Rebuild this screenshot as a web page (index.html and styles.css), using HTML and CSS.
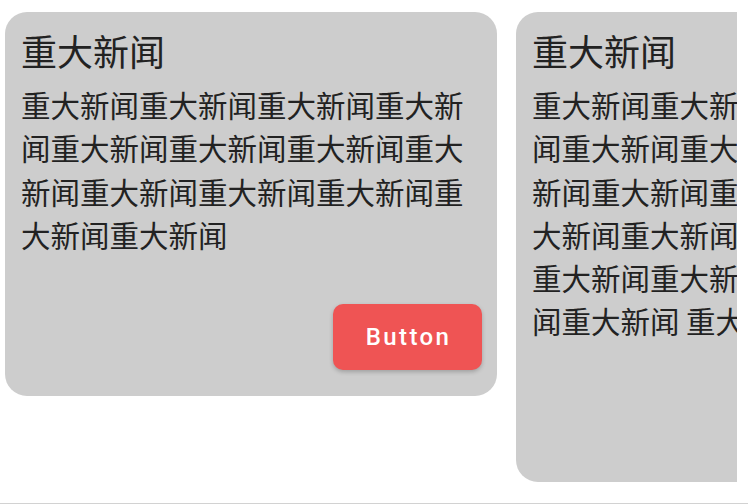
FILE: index.html
```html
<!DOCTYPE html>
<html lang="zh">
<head>
  <meta charset="UTF-8">
  <meta name="viewport" content="width=device-width, initial-scale=1.0">
  <title>重大新闻</title>
  <link rel="stylesheet" href="styles.css">
</head>
<body>
  <div class="page">
    <div class="strip flex row gap">
      <div class="card flex column">
        <h2 class="card-title">重大新闻</h2>
        <p class="card-text">重大新闻重大新闻重大新闻重大新闻重大新闻重大新闻重大新闻重大新闻重大新闻重大新闻重大新闻重大新闻重大新闻</p>
        <div class="card-actions flex">
          <button class="btn">Button</button>
        </div>
      </div>
      <div class="card tall flex column">
        <h2 class="card-title">重大新闻</h2>
        <p class="card-text">重大新闻重大新闻重大新闻重大新闻重大新闻重大新闻重大新闻重大新闻重大新闻重大新闻重大新闻重大新闻重大新闻重大新闻重大新闻重大新闻重大新闻重大新闻重大新闻重大新闻 重大新闻</p>
      </div>
    </div>
  </div>
</body>
</html>
```

FILE: styles.css
```css
* {
  box-sizing: border-box;
}
body {
  margin: 0;
  background: #fff;
  font-family: "Noto Sans CJK SC", "Noto Sans", sans-serif;
  color: #222;
}
.flex {
  display: flex;
}
.row {
  flex-flow: row nowrap;
  align-items: flex-start;
}
.column {
  flex-flow: column nowrap;
}
.gap {
  gap: 19px;
}
.page {
  height: 504px;
  border-bottom: 1px solid #d2d2d2;
}
.strip {
  width: 737px;
  overflow: hidden;
  padding: 12px 0 0 5px;
}
.card {
  flex: 0 0 492px;
  background: #cdcdcd;
  border-radius: 22px;
  padding: 14px 16px 26px 16px;
}
.tall {
  min-height: 470px;
}
.card-title {
  margin: 0;
  font-size: 36px;
  font-weight: 400;
  line-height: 48px;
}
.card-text {
  margin: 9px 0 0 0;
  font-size: 29.5px;
  line-height: 43.3px;
}
.card-actions {
  justify-content: flex-end;
  margin-top: 48px;
  margin-right: -1px;
}
.btn {
  width: 149px;
  height: 66px;
  border: none;
  border-radius: 10px;
  background: #ef5454;
  color: #fff;
  font-family: Roboto, "Noto Sans", sans-serif;
  font-weight: 500;
  font-size: 24px;
  letter-spacing: 2.4px;
  padding: 0 0 0 2px;
  box-shadow: 0 2px 4px rgba(0, 0, 0, .22);
}
```
